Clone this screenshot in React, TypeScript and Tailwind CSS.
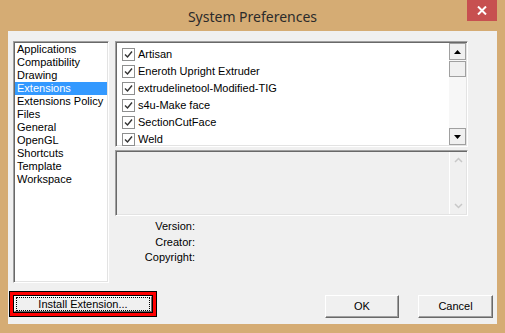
import { ReactNode } from "react";

const categories = [
  "Applications",
  "Compatibility",
  "Drawing",
  "Extensions",
  "Extensions Policy",
  "Files",
  "General",
  "OpenGL",
  "Shortcuts",
  "Template",
  "Workspace",
];

const extensions = [
  "Artisan",
  "Eneroth Upright Extruder",
  "extrudelinetool-Modified-TIG",
  "s4u-Make face",
  "SectionCutFace",
  "Weld",
];

const sunken =
  "border border-t-[#a0a0a0] border-l-[#a0a0a0] border-b-white border-r-white shadow-[inset_1px_1px_0_#696969,inset_-1px_-1px_0_#e3e3e3]";

const Check = () => (
  <div className="w-[13px] h-[13px] border border-[#8e8f8f] bg-white flex items-center justify-center shrink-0">
    <svg width="9" height="9" viewBox="0 0 9 9">
      <path d="M1 4.5 L3.5 7 L8 1.5" fill="none" stroke="#333" strokeWidth="1.4" />
    </svg>
  </div>
);

const ScrollBtn = ({ children }: { children: ReactNode }) => (
  <div className="w-[17px] h-[17px] border border-[#a0a0a0] bg-[#f0f0f0] flex items-center justify-center">
    {children}
  </div>
);

const Button = ({ label, className = "" }: { label: string; className?: string }) => (
  <div
    className={`h-[23px] flex items-center justify-center bg-[#f0f0f0] border border-t-white border-l-white border-b-[#696969] border-r-[#696969] shadow-[inset_-1px_-1px_0_#a0a0a0] ${className}`}
  >
    {label}
  </div>
);

export default function App() {
  return (
    <div
      className="w-[505px] h-[333px] bg-[#d5ac74] flex flex-col text-[11px] text-black"
      style={{ fontFamily: '"Liberation Sans", Arial, sans-serif' }}
    >
      {/* title bar */}
      <div className="h-[31px] relative flex items-center justify-center">
        <span
          className="text-[14px] text-[#2b2b2b] pt-[2px]"
          style={{ fontFamily: '"Noto Sans", sans-serif' }}
        >
          System Preferences
        </span>
        <div className="absolute right-[8px] top-0 w-[30px] h-[21px] bg-[#c75050] flex items-center justify-center">
          <svg width="10" height="9" viewBox="0 0 10 9">
            <path d="M1 0.5 L9 8.5 M9 0.5 L1 8.5" stroke="white" strokeWidth="2" />
          </svg>
        </div>
      </div>

      {/* client */}
      <div className="ml-[8px] w-[489px] h-[293px] bg-[#f0f0f0] flex flex-col pt-[10px]">
        <div className="flex">
          {/* categories */}
          <div className={`ml-[5px] w-[96px] h-[242px] bg-white ${sunken} pt-[1px] pl-[1px] pr-[1px]`}>
            {categories.map((c) => (
              <div
                key={c}
                className={`h-[13px] leading-[13px] pl-[2px] whitespace-nowrap ${
                  c === "Extensions" ? "bg-[#3399ff] text-white" : ""
                }`}
              >
                {c}
              </div>
            ))}
          </div>

          {/* right column */}
          <div className="ml-[6px] w-[353px] flex flex-col">
            <div className={`h-[106px] bg-white ${sunken} flex p-[1px]`}>
              <div className="flex-1 pt-[3px] pl-[5px]">
                {extensions.map((e) => (
                  <div key={e} className="h-[17px] flex items-center gap-[3px] whitespace-nowrap text-[11px]">
                    <Check />
                    <span>{e}</span>
                  </div>
                ))}
              </div>
              <div className="w-[17px] flex flex-col bg-[#f7f7f7]">
                <ScrollBtn>
                  <svg width="7" height="4" viewBox="0 0 7 4">
                    <path d="M0 4 L3.5 0 L7 4 Z" fill="black" />
                  </svg>
                </ScrollBtn>
                <div className="w-[17px] h-[16px] border border-[#a0a0a0] bg-[#f0f0f0] mt-[1px]" />
                <div className="flex-1" />
                <ScrollBtn>
                  <svg width="7" height="4" viewBox="0 0 7 4">
                    <path d="M0 0 L3.5 4 L7 0 Z" fill="black" />
                  </svg>
                </ScrollBtn>
              </div>
            </div>

            <div className={`mt-[3px] h-[66px] bg-[#f0f0f0] ${sunken} flex p-[1px]`}>
              <div className="flex-1" />
              <div className="w-[17px] border-l border-white flex flex-col items-center justify-between py-[5px]">
                <svg width="9" height="6" viewBox="0 0 9 6">
                  <path d="M1 5 L4.5 1.5 L8 5" fill="none" stroke="#c8c8c8" strokeWidth="1.5" />
                </svg>
                <svg width="9" height="6" viewBox="0 0 9 6">
                  <path d="M1 1 L4.5 4.5 L8 1" fill="none" stroke="#c8c8c8" strokeWidth="1.5" />
                </svg>
              </div>
            </div>

            <div className="mt-[3px] w-[80px] flex flex-col items-end">
              <div className="h-[15.5px] leading-[15.5px]">Version:</div>
              <div className="h-[15.5px] leading-[15.5px]">Creator:</div>
              <div className="h-[15.5px] leading-[15.5px]">Copyright:</div>
            </div>
          </div>
        </div>

        {/* bottom buttons */}
        <div className="flex items-start mt-[auto] mb-[6px]">
          <div className="ml-[1px] w-[148px] h-[26px] border border-black bg-[#ff0000] p-[3px]">
            <div className="h-full border border-black">
              <div className="h-full bg-[#f0f0f0] border border-t-white border-l-white border-b-[#696969] border-r-[#696969] px-[1px]">
                <div className="h-full border border-dotted border-black flex items-center justify-center">
                  Install Extension...
                </div>
              </div>
            </div>
          </div>
          <Button label="OK" className="ml-[168px] mt-[4px] w-[74px]" />
          <Button label="Cancel" className="ml-[19px] mt-[4px] w-[75px]" />
        </div>
      </div>
    </div>
  );
}
